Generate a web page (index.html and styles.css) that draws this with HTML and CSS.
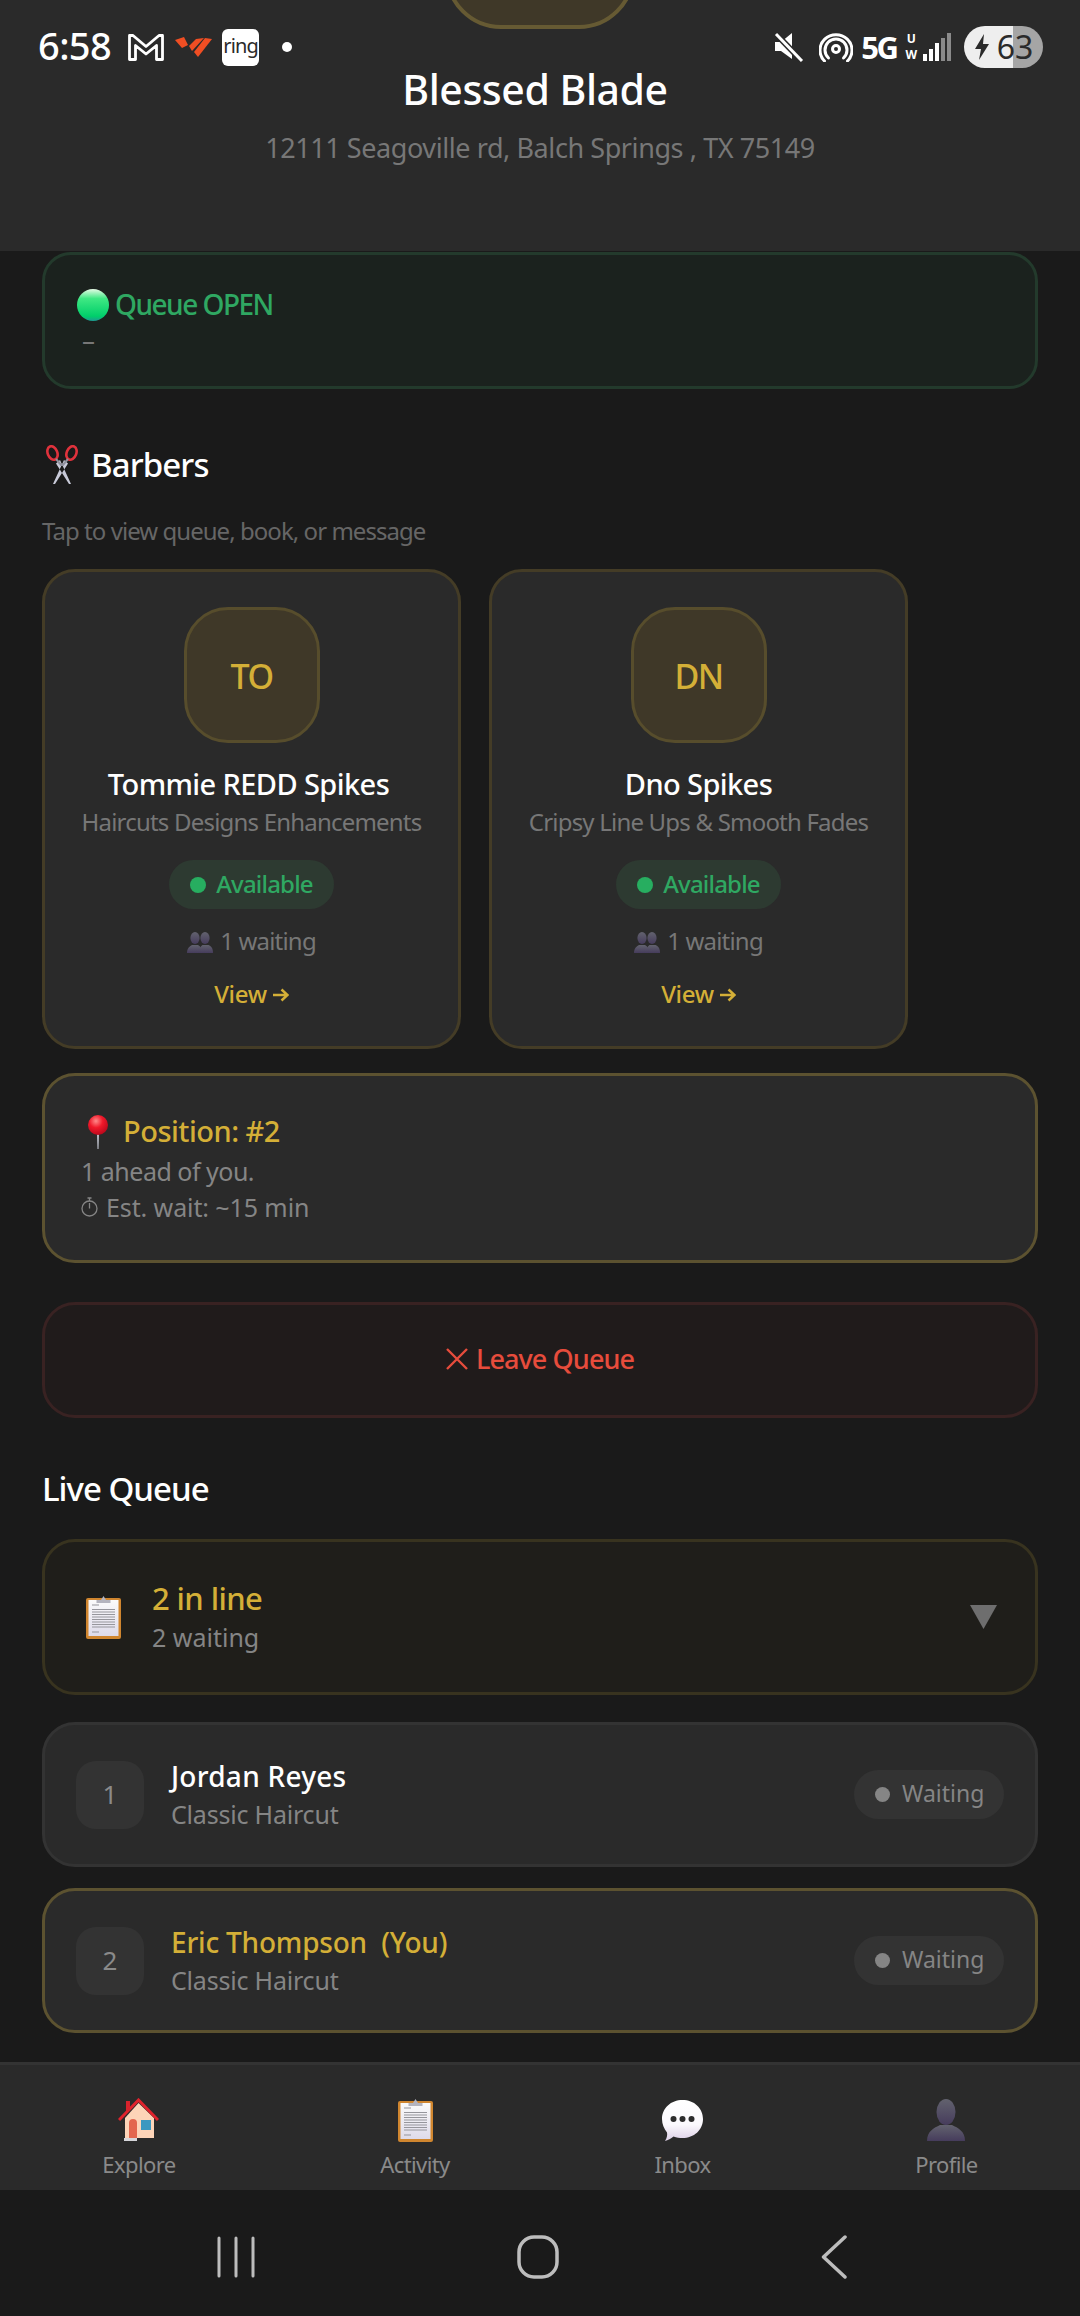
FILE: index.html
```html
<!DOCTYPE html>
<html lang="en">
<head>
<meta charset="utf-8">
<title>Blessed Blade</title>
<link rel="stylesheet" href="styles.css">
</head>
<body>
<svg class="defs" width="0" height="0" aria-hidden="true">
  <defs>
    <linearGradient id="busts" x1="0" y1="0" x2="0" y2="1"><stop offset="0" stop-color="#62626e"/><stop offset="1" stop-color="#463c5c"/></linearGradient>
    <linearGradient id="ball" x1="0" y1="0" x2="0" y2="1"><stop offset="0" stop-color="#e6fbe6"/><stop offset=".3" stop-color="#3fe883"/><stop offset=".85" stop-color="#00cf6a"/><stop offset="1" stop-color="#1d9a92"/></linearGradient>
    <linearGradient id="bubble" x1="0" y1="0" x2="0" y2="1"><stop offset="0" stop-color="#fff"/><stop offset=".6" stop-color="#fbf9fd"/><stop offset="1" stop-color="#dccfe6"/></linearGradient>
    <radialGradient id="pinhead" cx=".4" cy=".3" r=".75"><stop offset="0" stop-color="#ff8a8a"/><stop offset=".45" stop-color="#f0192a"/><stop offset="1" stop-color="#b5061a"/></radialGradient>
    <linearGradient id="sheet" x1="0" y1="0" x2="0" y2="1"><stop offset="0" stop-color="#fbfbfb"/><stop offset="1" stop-color="#dedbea"/></linearGradient>
    <symbol id="clipboard" viewBox="0 0 35 44">
      <rect x="0" y="3" width="35" height="41" rx="2" fill="#d0862f"/>
      <rect x="2.500" y="5" width="30" height="36" fill="url(#sheet)"/>
      <path d="M6 10h7M6 14.500h23M6 17h23M6 19.500h23M6 22h23M6 24.500h23M6 27h23M6 29.500h23M6 32h23M6 37h7" stroke="#96969c" stroke-width="1.100"/>
      <path d="M10.500 8V5h4.500l2.500-4 2.500 4h4.500v3z" fill="#b4b4be"/>
    </symbol>
    <symbol id="people" viewBox="0 0 26 21">
      <g fill="url(#busts)">
        <ellipse cx="8" cy="6" rx="4.600" ry="6"/><path d="M0 21c0-5 3-7 5-8h6c2 1 4 3 4 8z"/>
        <ellipse cx="18" cy="6" rx="4.600" ry="6"/><path d="M12 21c0-5 2-7 3.500-8h6c2.500 1 4.500 3 4.500 8z"/>
      </g>
    </symbol>
    <symbol id="arrow" viewBox="0 0 16 14">
      <path d="M0 7h14M8.500 1.500 14.500 7 8.500 12.500" fill="none" stroke="#d4af37" stroke-width="2.500"/>
    </symbol>
  </defs>
</svg>

<header class="top">
  <div class="status">
    <div class="status-side">
      <span class="clock">6:58</span>
      <svg class="si-m" width="36" height="27" viewBox="0 0 36 27"><path d="M1.500 25.500v-24h3.500l13 11 13-11h3.500v24h-6v-14l-10.500 8.500-10.500-8.500v14z" fill="none" stroke="#fff" stroke-width="2.800" stroke-linejoin="round"/></svg>
      <svg class="si-v" width="37" height="21" viewBox="0 0 37 21"><g fill="#f04e23"><path d="M0 3 9 0l4 8-6 3z"/><path d="M14 9l7-7 8-1-12 13z"/><path d="M19 15 30 1l7 1-14 18z"/></g></svg>
      <span class="ring">ring</span>
      <span class="dot-note"></span>
    </div>
    <div class="status-side">
      <svg class="si-mute" width="30" height="30" viewBox="0 0 30 30"><path d="M1 10h6L18 1v26L7 19H1z" fill="#fff"/><path d="M2 2l26 27" stroke="#2a2a2a" stroke-width="6"/><path d="M2 2l26 27" stroke="#fff" stroke-width="3"/></svg>
      <svg class="si-hot" width="34" height="30" viewBox="0 0 34 30"><g fill="none" stroke="#fff" stroke-width="3" stroke-linecap="round"><circle cx="17" cy="17" r="3.500"/><path d="M9.500 26a11 11 0 1 1 15 0"/><path d="M5.500 29a16 15.500 0 1 1 23 0"/></g></svg>
      <span class="five">5G</span>
      <span class="uw"><span>U</span><span>W</span></span>
      <svg class="si-sig" width="29" height="28" viewBox="0 0 29 28"><rect x="0" y="21" width="4" height="7" fill="#fff"/><rect x="6" y="16" width="4" height="12" fill="#fff"/><rect x="12" y="10" width="4" height="18" fill="#fff"/><rect x="18" y="5" width="4" height="23" fill="#8a8a8a"/><rect x="24" y="0" width="4" height="28" fill="#8a8a8a"/></svg>
      <span class="battery"><svg width="16" height="26" viewBox="0 0 16 26"><path d="M10 0 1 15h6l-2 11 10-16H9z" fill="#2a2a2a"/></svg><span>63</span></span>
    </div>
  </div>
  <div class="logo-peek"></div>
  <h1 class="shop">Blessed Blade</h1>
  <p class="address">12111 Seagoville rd, Balch Springs , TX 75149</p>
</header>

<main class="content">
  <section class="queue-open">
    <div class="queue-open-title">
      <svg width="32" height="32" viewBox="0 0 32 32"><circle cx="16" cy="16" r="16" fill="url(#ball)"/></svg>
      <span>Queue OPEN</span>
    </div>
    <div class="queue-open-sub">–</div>
  </section>

  <h2 class="section-title barbers-title">
    <svg width="34" height="40" viewBox="0 0 34 40"><path d="M19 15l4 3.500L10 39H8zM15 15l-4 3.500L24 39h2z" fill="#c8cad8"/><g fill="none" stroke="#e0323c" stroke-width="2.600"><ellipse cx="7.500" cy="8" rx="4.800" ry="7" transform="rotate(-22 7.500 8)"/><ellipse cx="26.500" cy="8" rx="4.800" ry="7" transform="rotate(22 26.500 8)"/></g><path d="M11 14l5 6h2l5-6" fill="none" stroke="#8f909c" stroke-width="2"/></svg>
    <span>Barbers</span>
  </h2>
  <p class="hint">Tap to view queue, book, or message</p>

  <div class="barber-row">
    <article class="barber">
      <div class="avatar">TO</div>
      <div class="barber-name barber-name-shift">Tommie REDD Spikes</div>
      <div class="barber-spec">Haircuts Designs Enhancements</div>
      <div class="avail"><i class="avail-dot"></i><span>Available</span></div>
      <div class="waiting-line"><svg width="26" height="21"><use href="#people"/></svg><span>1 waiting</span></div>
      <div class="view-line"><span>View</span><svg width="16" height="14"><use href="#arrow"/></svg></div>
    </article>
    <article class="barber">
      <div class="avatar">DN</div>
      <div class="barber-name">Dno Spikes</div>
      <div class="barber-spec">Cripsy Line Ups &amp; Smooth Fades</div>
      <div class="avail"><i class="avail-dot"></i><span>Available</span></div>
      <div class="waiting-line"><svg width="26" height="21"><use href="#people"/></svg><span>1 waiting</span></div>
      <div class="view-line"><span>View</span><svg width="16" height="14"><use href="#arrow"/></svg></div>
    </article>
  </div>

  <section class="position">
    <div class="position-title">
      <svg width="22" height="34" viewBox="0 0 22 34"><path d="M10 16h2l-.5 18h-1z" fill="#c9ccd8"/><circle cx="11" cy="10" r="10" fill="url(#pinhead)"/></svg>
      <span>Position: #2</span>
    </div>
    <div class="position-line">1 ahead of you.</div>
    <div class="position-line position-est">
      <svg width="17" height="20" viewBox="0 0 17 20"><g fill="none" stroke="#858585" stroke-width="1.300"><circle cx="8.500" cy="11.500" r="7.500"/><path d="M8.500 11.500V6M6.500 1h4M8.500 1v3"/></g></svg>
      <span>Est. wait: ~15 min</span>
    </div>
  </section>

  <button class="leave" type="button">
    <svg width="22" height="22" viewBox="0 0 22 22"><path d="M1 1l20 20M21 1 1 21" stroke="#e74c3c" stroke-width="2.400" fill="none"/></svg>
    <span>Leave Queue</span>
  </button>

  <h2 class="section-title live-title">Live Queue</h2>

  <section class="summary">
    <svg class="summary-icon" width="35" height="44"><use href="#clipboard"/></svg>
    <div class="summary-text">
      <div class="summary-main">2 in line</div>
      <div class="summary-sub">2 waiting</div>
    </div>
    <svg class="summary-caret" width="27" height="24" viewBox="0 0 27 24"><path d="M0 0h27L13.500 24z" fill="#6e6e6e"/></svg>
  </section>

  <div class="queue-row">
    <div class="num">1</div>
    <div class="who">
      <div class="who-name">Jordan Reyes</div>
      <div class="who-sub">Classic Haircut</div>
    </div>
    <div class="wait-pill"><i class="wait-dot"></i><span>Waiting</span></div>
  </div>
  <div class="queue-row queue-row-me">
    <div class="num">2</div>
    <div class="who">
      <div class="who-name who-me">Eric Thompson&nbsp; (You)</div>
      <div class="who-sub">Classic Haircut</div>
    </div>
    <div class="wait-pill"><i class="wait-dot"></i><span>Waiting</span></div>
  </div>
</main>

<nav class="tabs">
  <a class="tab">
    <svg width="41" height="44" viewBox="0 0 41 44"><path d="M7 20v20h29V20L20.500 5z" fill="#fdd4b8"/><path d="M1 22 20.500 2 40 22" fill="none" stroke="#e0222c" stroke-width="3"/><rect x="8" y="3" width="4" height="10" fill="#d8232c"/><path d="M11 40V25a4 4 0 0 1 8 0v15z" fill="#e3674f"/><rect x="23" y="22" width="10" height="10" fill="#3c98c0"/><path d="M6 40h13v3H6z" fill="#d6d6da"/></svg>
    <span>Explore</span>
  </a>
  <a class="tab">
    <svg width="35" height="44"><use href="#clipboard"/></svg>
    <span>Activity</span>
  </a>
  <a class="tab">
    <svg width="41" height="44" viewBox="0 0 41 44"><path d="M20.500 2C32 2 41 10 41 21S32 40 20.500 40c-3 0-6-.5-9-1.600C9 40.500 6 42 3 43c2-3 2.500-6 2-8.500C2 30.500 0 26 0 21 0 10 9 2 20.500 2z" fill="url(#bubble)"/><circle cx="11.500" cy="21" r="3" fill="#2d2d2d"/><circle cx="20.500" cy="21" r="3" fill="#2d2d2d"/><circle cx="29.500" cy="21" r="3" fill="#2d2d2d"/></svg>
    <span>Inbox</span>
  </a>
  <a class="tab">
    <svg width="38" height="44" viewBox="0 0 38 44"><g fill="url(#busts)"><ellipse cx="19" cy="14" rx="9.500" ry="13"/><path d="M0 43c0-10 7-13 13-16h12c6 3 13 6 13 16z"/></g></svg>
    <span>Profile</span>
  </a>
</nav>

<div class="system-nav">
  <svg width="38" height="42" viewBox="0 0 38 42"><path d="M2 2v38M19 2v38M36 2v38" stroke="#bdbdbd" stroke-width="3" stroke-linecap="round"/></svg>
  <svg width="42" height="44" viewBox="0 0 42 44"><rect x="2" y="2" width="38" height="40" rx="15" fill="none" stroke="#bdbdbd" stroke-width="3.500"/></svg>
  <svg width="26" height="44" viewBox="0 0 26 44"><path d="M24 2 2.500 22 24 42" fill="none" stroke="#bdbdbd" stroke-width="3.500" stroke-linecap="round" stroke-linejoin="round"/></svg>
</div>
</body>
</html>
```

FILE: styles.css
```css
* { box-sizing: border-box; }
html, body { margin: 0; padding: 0; }
body {
  width: 1080px;
  height: 2316px;
  overflow: hidden;
  display: flex;
  flex-direction: column;
  background: #1a1a1a;
  color: #fff;
  font-family: "Noto Sans", "Open Sans", sans-serif;
}
.defs { position: absolute; }
h1, h2, p { margin: 0; font-weight: 500; }

/* Header */
.top {
  position: relative;
  height: 251px;
  flex: none;
  overflow: hidden;
  background: #2a2a2a;
  text-align: center;
}
.status {
  position: absolute;
  top: 20px;
  left: 0;
  right: 0;
  height: 54px;
  padding: 0 37px 0 38px;
  display: flex;
  justify-content: space-between;
  align-items: center;
}
.status-side { display: flex; align-items: center; }
.clock { font-size: 38px; line-height: 50px; height: 54px; font-weight: 500; letter-spacing: -.6px; }
.si-m { margin-left: 17px; }
.si-v { margin-left: 11px; }
.ring {
  margin-left: 10px;
  width: 37px;
  height: 37px;
  border-radius: 6px;
  background: #fff;
  color: #2a2a2a;
  font-size: 20px;
  line-height: 33px;
  letter-spacing: -.8px;
  text-align: center;
}
.dot-note { margin-left: 23px; width: 10px; height: 10px; border-radius: 50%; background: #fff; }
.si-hot { margin-left: 15px; }
.five { margin-left: 8px; font-size: 31px; font-weight: 700; line-height: 40px; letter-spacing: -2.5px; }
.uw { margin-left: 9px; display: flex; flex-direction: column; font-size: 12px; font-weight: 700; line-height: 16px; text-align: center; }
.si-sig { margin-left: 6px; }
.battery {
  margin-left: 12px;
  width: 79px;
  height: 42px;
  border-radius: 21px;
  background: linear-gradient(to right, #eeeeee 62%, #a5a5a5 62%);
  color: #2a2a2a;
  font-size: 32px;
  line-height: 42px;
  display: flex;
  align-items: center;
  justify-content: center;
  gap: 7px;
}
.logo-peek {
  width: 190px;
  height: 190px;
  margin: -161px auto 0;
  border: 4px solid #665a33;
  border-radius: 56px;
  background: #3f3828;
}
.shop { margin-top: 36px; padding-right: 10px; font-size: 41px; line-height: 48px; padding-bottom: 2px; font-weight: 500; letter-spacing: -.45px; }
.address { margin-top: 13px; font-size: 27px; line-height: 40px; font-weight: 400; letter-spacing: -.42px; color: #777; }

/* Main column */
.content { flex: 1; min-height: 0; overflow: hidden; padding: 1px 42px 0; }

.queue-open {
  border: 3px solid #233a2c;
  border-radius: 29px;
  background: #1b221e;
  padding: 28px 30px 29px;
}
.queue-open-title { display: flex; align-items: center; gap: 6px; padding-left: 2px; font-size: 28px; font-weight: 500; line-height: 44px; letter-spacing: -1.5px; color: #2fa862; }
.queue-open-title span { line-height: 42px; padding-bottom: 2px; }
.queue-open-sub { padding: 0 0 3px 7px; font-size: 26px; line-height: 27px; color: #777; }

.section-title { font-size: 33px; line-height: 48px; padding-bottom: 2px; font-weight: 500; letter-spacing: -.9px; }
.barbers-title { margin-top: 52px; padding-left: 3px; display: flex; align-items: center; gap: 12px; }
.hint { margin-top: 23px; font-size: 24px; line-height: 34px; padding-bottom: 2px; font-weight: 400; letter-spacing: -.95px; color: #666; }

.barber-row { margin-top: 19px; display: flex; gap: 28px; }
.barber {
  width: 419px;
  border: 3px solid #443c26;
  border-radius: 33px;
  background: #2a2a2a;
  padding: 35px 0 33px;
  display: flex;
  flex-direction: column;
  align-items: center;
}
.avatar {
  width: 136px;
  height: 136px;
  border: 3px solid #574d2c;
  border-radius: 44px;
  background: #3f3828;
  color: #d4af37;
  font-size: 34px;
  font-weight: 500;
  letter-spacing: -1.5px;
  line-height: 132px;
  text-align: center;
}
.barber-name { margin-top: 22px; font-size: 29px; line-height: 38px; padding-bottom: 2px; font-weight: 500; letter-spacing: -.6px; }
.barber-name-shift { padding-right: 6px; }
.barber-spec { font-size: 24px; line-height: 34px; padding-bottom: 2px; letter-spacing: -.8px; color: #777; }
.avail {
  margin-top: 19px;
  height: 49px;
  padding: 0 21px;
  border-radius: 25px;
  background: #2d3a31;
  display: flex;
  align-items: center;
  gap: 10px;
  font-size: 24px;
  font-weight: 500;
  letter-spacing: -.8px;
  color: #2fa862;
}
.avail span { line-height: 31px; padding-bottom: 2px; }
.avail-dot { width: 16px; height: 16px; border-radius: 50%; background: #27ae60; }
.waiting-line { margin-top: 15px; display: flex; align-items: center; gap: 7px; font-size: 24px; letter-spacing: -.8px; color: #777; }
.waiting-line span { line-height: 34px; padding-bottom: 2px; }
.view-line { margin-top: 17px; display: flex; align-items: center; gap: 6px; font-size: 24px; font-weight: 500; letter-spacing: -.3px; color: #d4af37; }
.view-line span { line-height: 34px; padding-bottom: 2px; }

.position {
  margin-top: 24px;
  border: 3px solid #5c5230;
  border-radius: 33px;
  background: #2a2a2a;
  padding: 34px 32px 34px 35px;
}
.position-title { display: flex; align-items: center; gap: 14px; padding-left: 7px; font-size: 29px; font-weight: 500; letter-spacing: -.5px; color: #d4af37; }
.position-title span { line-height: 42px; padding-bottom: 2px; }
.position-line { padding-left: 1px; font-size: 25px; line-height: 34px; padding-bottom: 2px; letter-spacing: -.5px; color: #858585; }
.position-est { display: flex; align-items: center; gap: 8px; letter-spacing: -.1px; }

.leave {
  display: flex;
  width: 100%;
  height: 116px;
  margin-top: 39px;
  border: 3px solid #392222;
  border-radius: 33px;
  background: #201b1b;
  padding: 0 0 3px;
  align-items: center;
  justify-content: center;
  gap: 8px;
  font-family: inherit;
  font-size: 27px;
  font-weight: 500;
  letter-spacing: -.9px;
  color: #e74c3c;
}

.live-title { margin-top: 47px; letter-spacing: -1px; }

.summary {
  margin-top: 24px;
  height: 156px;
  border: 3px solid #38331f;
  border-radius: 33px;
  background: #1f1e1a;
  padding: 0 38px 0 41px;
  display: flex;
  align-items: center;
}
.summary-icon { flex: none; }
.summary-text { margin-left: 31px; flex: 1; }
.summary-main { font-size: 31px; line-height: 38px; padding-bottom: 2px; font-weight: 500; letter-spacing: -.6px; color: #d4af37; }
.summary-sub { font-size: 25px; line-height: 36px; color: #858585; }

.queue-row {
  margin-top: 27px;
  height: 145px;
  border: 3px solid #333;
  border-radius: 33px;
  background: #2a2a2a;
  padding: 0 31px;
  display: flex;
  align-items: center;
}
.queue-row-me { margin-top: 21px; border-color: #5c5230; }
.num {
  flex: none;
  width: 68px;
  height: 68px;
  border-radius: 20px;
  background: #333;
  color: #8a8a8a;
  font-size: 26px;
  line-height: 66px;
  text-align: center;
}
.who { margin-left: 27px; flex: 1; }
.who-name { font-size: 28px; line-height: 38px; padding-bottom: 2px; font-weight: 500; letter-spacing: .25px; }
.who-me { letter-spacing: -.2px; color: #d4af37; }
.who-sub { font-size: 25px; line-height: 34px; padding-bottom: 2px; letter-spacing: -.2px; color: #858585; }
.wait-pill {
  width: 150px;
  height: 49px;
  padding-left: 21px;
  border-radius: 25px;
  background: #333;
  display: flex;
  align-items: center;
  gap: 12px;
  font-size: 23px;
  color: #858585;
}
.wait-pill span { line-height: 29px; padding-bottom: 2px; }
.wait-dot { width: 15px; height: 15px; border-radius: 50%; background: #858585; }

/* Tabs */
.tabs {
  flex: none;
  height: 128px;
  border-top: 3px solid #333;
  background: #2a2a2a;
  padding-top: 33px;
  display: flex;
  justify-content: space-around;
  align-items: flex-start;
}
.tab { display: flex; flex-direction: column; align-items: center; gap: 6px; font-size: 22px; line-height: 32px; letter-spacing: -.6px; color: #8a8a8a; }

.system-nav {
  flex: none;
  height: 126px;
  padding: 8px 0 0 217px;
  display: flex;
  align-items: center;
  gap: 262px;
  background: #1a1a1a;
}
```
